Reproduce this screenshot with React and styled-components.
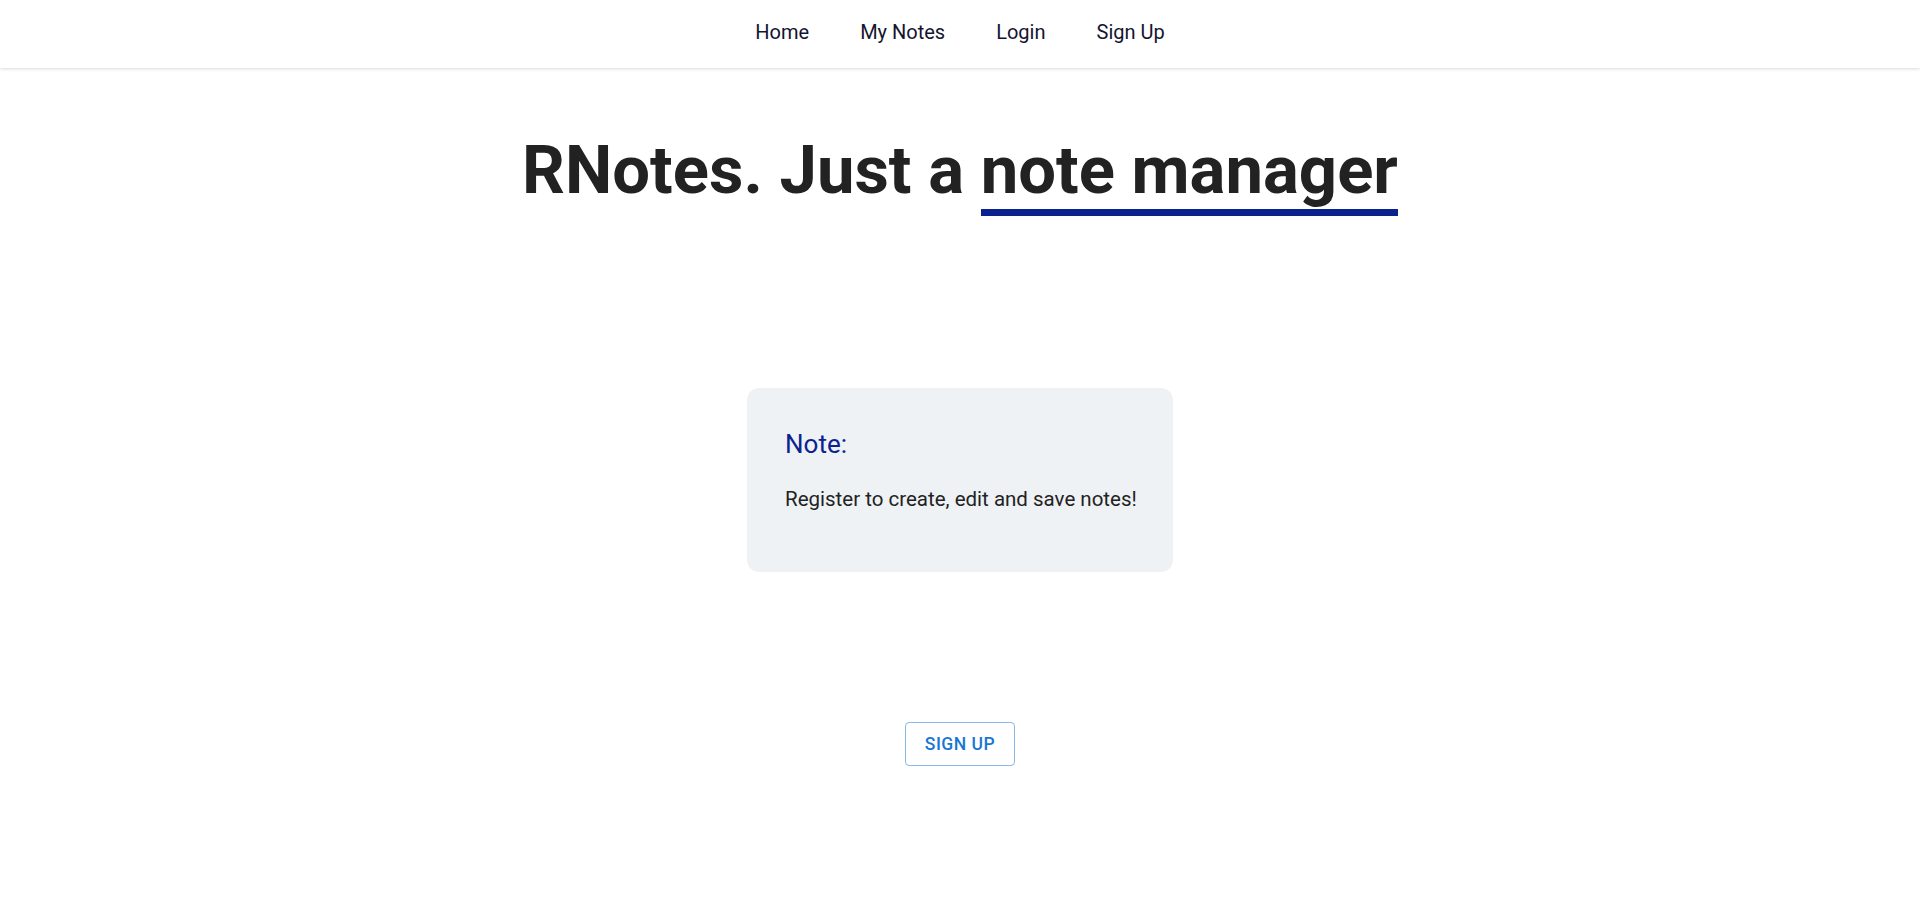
import React from 'react'
import styled, { createGlobalStyle } from 'styled-components'

const GlobalStyle = createGlobalStyle`
  body {
    margin: 0;
    background: #fff;
    font-family: Roboto, "Liberation Sans", sans-serif;
  }
`

const NavBar = styled.nav`
  height: 68px;
  box-sizing: border-box;
  padding-bottom: 5px;
  display: flex;
  justify-content: center;
  align-items: center;
  gap: 51px;
  background: #fff;
  box-shadow: 0 1px 3px rgba(0, 0, 0, 0.15);
`

const NavLink = styled.a`
  font-size: 20px;
  color: #14142e;
  text-decoration: none;
  cursor: pointer;
`

const Main = styled.main`
  display: flex;
  flex-direction: column;
  align-items: center;
`

const Headline = styled.h1`
  margin: 62px 0 0;
  font-size: 67px;
  font-weight: 700;
  color: #222;
  line-height: 1.2;
`

const Marked = styled.span`
  border-bottom: 7px solid #0b2290;
`

const Card = styled.div`
  margin-top: 178px;
  width: 426px;
  height: 184px;
  box-sizing: border-box;
  padding: 41px 30px 41px 38px;
  background: #eff2f5;
  border-radius: 12px;
`

const CardTitle = styled.h2`
  margin: 0;
  font-size: 26px;
  font-weight: 400;
  line-height: 1.2;
  color: #0b2290;
`

const CardText = styled.p`
  margin: 26px 0 0;
  font-size: 20.5px;
  line-height: 1.2;
  white-space: nowrap;
  color: #222;
`

const OutlineButton = styled.button`
  margin-top: 150px;
  height: 44px;
  padding: 0 19px;
  background: transparent;
  border: 1px solid rgba(25, 118, 210, 0.5);
  border-radius: 4px;
  color: #1976d2;
  font-family: inherit;
  font-size: 17.5px;
  font-weight: 500;
  letter-spacing: 0.5px;
  cursor: pointer;
`

const App = () => {
  return (
    <>
      <GlobalStyle />
      <NavBar>
        <NavLink>Home</NavLink>
        <NavLink>My Notes</NavLink>
        <NavLink>Login</NavLink>
        <NavLink>Sign Up</NavLink>
      </NavBar>
      <Main>
        <Headline>
          RNotes. Just a <Marked>note manager</Marked>
        </Headline>
        <Card>
          <CardTitle>Note:</CardTitle>
          <CardText>Register to create, edit and save notes!</CardText>
        </Card>
        <OutlineButton>SIGN UP</OutlineButton>
      </Main>
    </>
  )
}

export default App
